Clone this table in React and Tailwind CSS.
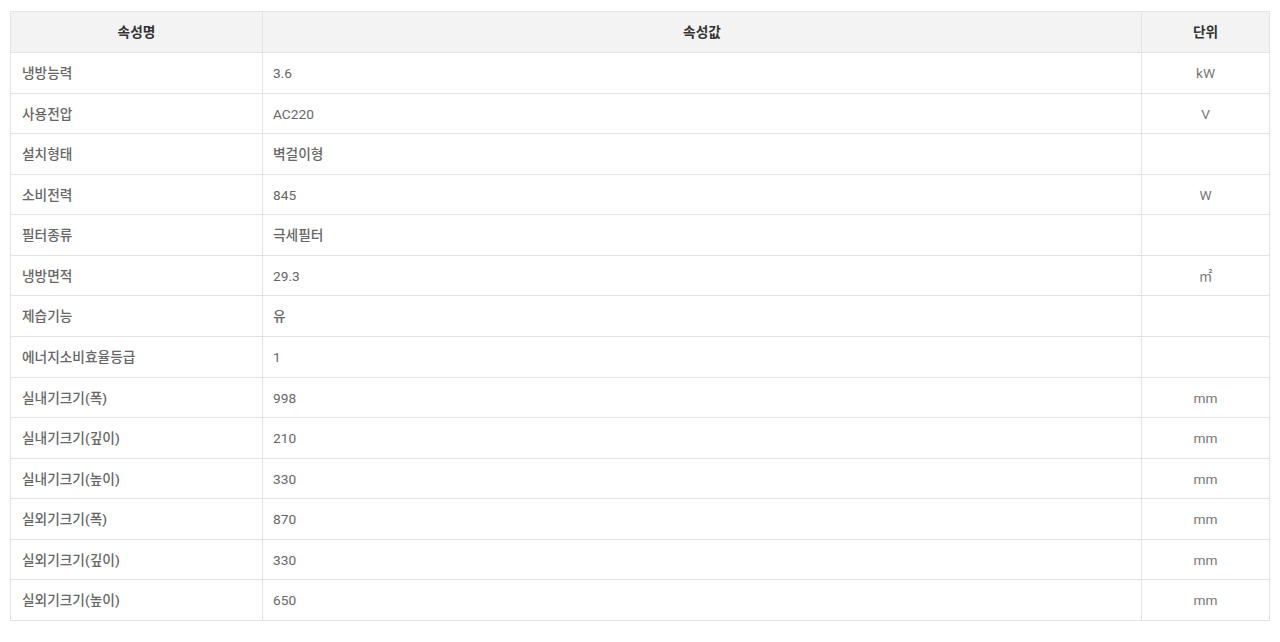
const rows = [
  ["냉방능력", "3.6", "kW"],
  ["사용전압", "AC220", "V"],
  ["설치형태", "벽걸이형", ""],
  ["소비전력", "845", "W"],
  ["필터종류", "극세필터", ""],
  ["냉방면적", "29.3", "㎡"],
  ["제습기능", "유", ""],
  ["에너지소비효율등급", "1", ""],
  ["실내기크기(폭)", "998", "mm"],
  ["실내기크기(깊이)", "210", "mm"],
  ["실내기크기(높이)", "330", "mm"],
  ["실외기크기(폭)", "870", "mm"],
  ["실외기크기(깊이)", "330", "mm"],
  ["실외기크기(높이)", "650", "mm"],
];

const isKorean = (s) => /[\uac00-\ud7a3]/.test(s);

export default function App() {
  return (
    <div
      className="w-[1280px] h-[642px] bg-white pt-[11px] pl-[10px]"
      style={{ fontFamily: 'Roboto, "Noto Sans CJK KR", sans-serif' }}
    >
      <table className="w-[1259px] border-collapse text-[13.7px] table-fixed">
        <colgroup>
          <col className="w-[252px]" />
          <col className="w-[879px]" />
          <col className="w-[128px]" />
        </colgroup>
        <thead>
          <tr className="h-[41px] bg-[#f3f3f3]">
            <th className="border border-[#e3e3e3] font-bold text-[#333] text-center">속성명</th>
            <th className="border border-[#e3e3e3] font-bold text-[#333] text-center">속성값</th>
            <th className="border border-[#e3e3e3] font-bold text-[#333] text-center">단위</th>
          </tr>
        </thead>
        <tbody>
          {rows.map((r, i) => (
            <tr key={i} className="h-[40.57px]">
              <td className="border border-[#e3e3e3] pl-[11px] pt-[1px] text-[#666] font-medium">{r[0]}</td>
              <td
                className={
                  isKorean(r[1])
                    ? "border border-[#e3e3e3] pl-[10px] pt-[1px] text-[#666] font-medium"
                    : "border border-[#e3e3e3] pl-[10px] pt-[1px] text-[#666]"
                }
              >
                {r[1]}
              </td>
              <td className="border border-[#e3e3e3] pt-[1px] text-center text-[#777]">{r[2]}</td>
            </tr>
          ))}
        </tbody>
      </table>
    </div>
  );
}
